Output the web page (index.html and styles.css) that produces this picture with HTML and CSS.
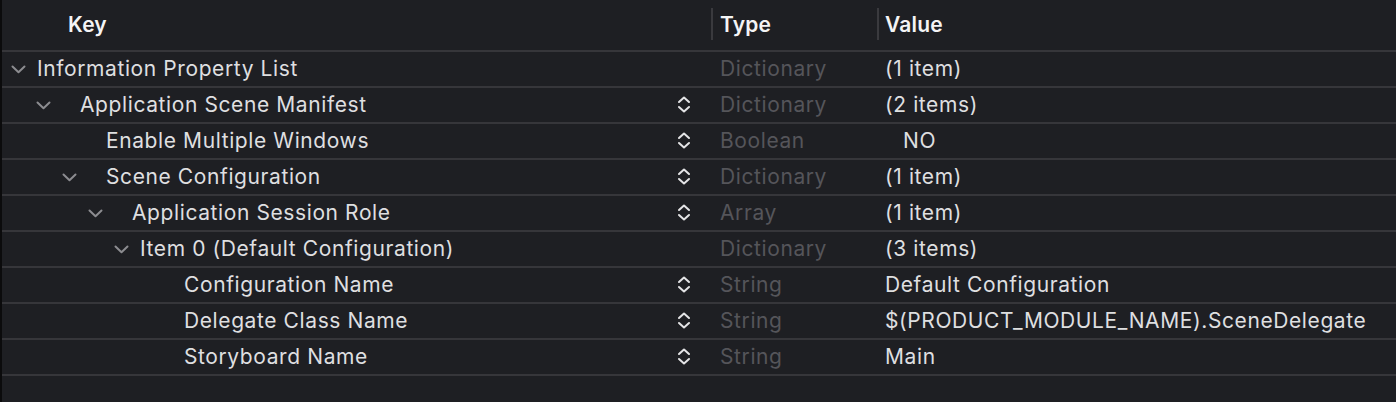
FILE: index.html
```html
<!DOCTYPE html>
<html>
<head>
<meta charset="utf-8">
<link rel="stylesheet" href="styles.css">
</head>
<body>
<div class="plist">
  <div class="header">
    <div class="hcell hkey">Key</div>
    <div class="hcell htype"><span class="divider"></span>Type</div>
    <div class="hcell hvalue"><span class="divider"></span>Value</div>
  </div>

  <div class="row">
    <div class="key lvl0"><svg class="chev" viewBox="0 0 15 9"><path d="M1.5 1.5 L7.5 7.2 L13.5 1.5"/></svg><span class="ktext">Information Property List</span></div>
    <div class="type">Dictionary</div>
    <div class="value">(1 item)</div>
  </div>

  <div class="row">
    <div class="key lvl1"><svg class="chev" viewBox="0 0 15 9"><path d="M1.5 1.5 L7.5 7.2 L13.5 1.5"/></svg><span class="ktext pad">Application Scene Manifest</span><svg class="step" viewBox="0 0 14 17"><path d="M2 6 L7 1.5 L12 6 M2 11 L7 15.5 L12 11"/></svg></div>
    <div class="type">Dictionary</div>
    <div class="value">(2 items)</div>
  </div>

  <div class="row">
    <div class="key lvl2"><span class="ktext">Enable Multiple Windows</span><svg class="step" viewBox="0 0 14 17"><path d="M2 6 L7 1.5 L12 6 M2 11 L7 15.5 L12 11"/></svg></div>
    <div class="type">Boolean</div>
    <div class="value bool">NO</div>
  </div>

  <div class="row">
    <div class="key lvl2c"><svg class="chev" viewBox="0 0 15 9"><path d="M1.5 1.5 L7.5 7.2 L13.5 1.5"/></svg><span class="ktext pad">Scene Configuration</span><svg class="step" viewBox="0 0 14 17"><path d="M2 6 L7 1.5 L12 6 M2 11 L7 15.5 L12 11"/></svg></div>
    <div class="type">Dictionary</div>
    <div class="value">(1 item)</div>
  </div>

  <div class="row">
    <div class="key lvl3c"><svg class="chev" viewBox="0 0 15 9"><path d="M1.5 1.5 L7.5 7.2 L13.5 1.5"/></svg><span class="ktext pad">Application Session Role</span><svg class="step" viewBox="0 0 14 17"><path d="M2 6 L7 1.5 L12 6 M2 11 L7 15.5 L12 11"/></svg></div>
    <div class="type">Array</div>
    <div class="value">(1 item)</div>
  </div>

  <div class="row">
    <div class="key lvl4c"><svg class="chev" viewBox="0 0 15 9"><path d="M1.5 1.5 L7.5 7.2 L13.5 1.5"/></svg><span class="ktext">Item 0 (Default Configuration)</span></div>
    <div class="type">Dictionary</div>
    <div class="value">(3 items)</div>
  </div>

  <div class="row">
    <div class="key lvl5"><span class="ktext">Configuration Name</span><svg class="step" viewBox="0 0 14 17"><path d="M2 6 L7 1.5 L12 6 M2 11 L7 15.5 L12 11"/></svg></div>
    <div class="type">String</div>
    <div class="value">Default Configuration</div>
  </div>

  <div class="row">
    <div class="key lvl5"><span class="ktext">Delegate Class Name</span><svg class="step" viewBox="0 0 14 17"><path d="M2 6 L7 1.5 L12 6 M2 11 L7 15.5 L12 11"/></svg></div>
    <div class="type">String</div>
    <div class="value">$(PRODUCT_MODULE_NAME).SceneDelegate</div>
  </div>

  <div class="row">
    <div class="key lvl5"><span class="ktext">Storyboard Name</span><svg class="step" viewBox="0 0 14 17"><path d="M2 6 L7 1.5 L12 6 M2 11 L7 15.5 L12 11"/></svg></div>
    <div class="type">String</div>
    <div class="value">Main</div>
  </div>
</div>
</body>
</html>
```

FILE: styles.css
```css
html, body {
  margin: 0;
  padding: 0;
  background: #1e1f23;
}
body {
  width: 1396px;
  height: 402px;
  overflow: hidden;
  font-family: Inter, "Noto Sans", sans-serif;
  font-size: 21px;
  letter-spacing: 0.6px;
  color: #dfdfe0;
}
.plist {
  border-left: 2px solid #0b0b0c;
  height: 402px;
  box-sizing: border-box;
}
.header, .row {
  display: grid;
  grid-template-columns: 709px 166px 1fr;
  border-bottom: 2px solid #36363a;
}
.header {
  height: 50px;
}
.hcell {
  display: flex;
  align-items: center;
  font-weight: 600;
  letter-spacing: 0.2px;
  color: #f4f4f5;
  position: relative;
  padding-bottom: 2px;
}
.hkey { padding-left: 66px; }
.htype { padding-left: 9px; }
.hvalue { padding-left: 8px; }
.divider {
  position: absolute;
  left: 0;
  top: 8px;
  width: 2px;
  height: 32px;
  background: #3a3a3e;
}
.row {
  height: 34px;
}
.key, .type, .value {
  display: flex;
  align-items: center;
  white-space: nowrap;
  padding-bottom: 1px;
}
.key {
  padding-right: 20px;
}
.chev {
  width: 15px;
  height: 9px;
  flex: none;
  fill: none;
  stroke: #8c8c90;
  stroke-width: 2;
  stroke-linecap: round;
  stroke-linejoin: round;
  margin-top: 2px;
}
.ktext {
  padding-left: 11px;
}
.ktext.pad {
  padding-left: 29px;
}
.lvl0 { padding-left: 9px; }
.lvl0 .ktext { padding-left: 11px; }
.lvl1 { padding-left: 34px; }
.lvl2 { padding-left: 104px; }
.lvl2 .ktext { padding-left: 0; }
.lvl2c { padding-left: 60px; }
.lvl3c { padding-left: 86px; }
.lvl4c { padding-left: 112px; }
.lvl5 { padding-left: 182px; }
.lvl5 .ktext { padding-left: 0; }
.step {
  margin-left: auto;
  width: 14px;
  height: 17px;
  flex: none;
  fill: none;
  stroke: #e4e4e6;
  stroke-width: 2;
  stroke-linecap: round;
  stroke-linejoin: round;
}
.type {
  padding-left: 9px;
  color: #55555a;
}
.value {
  padding-left: 8px;
  color: #dfdfe0;
}
.value.bool {
  padding-left: 26px;
}
```
